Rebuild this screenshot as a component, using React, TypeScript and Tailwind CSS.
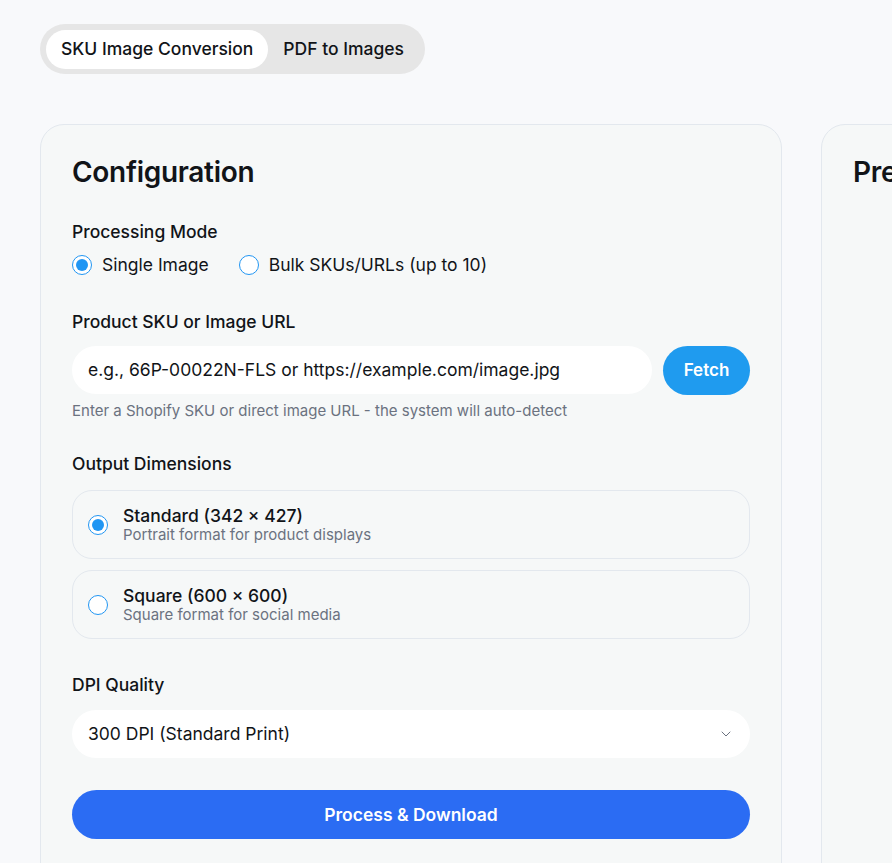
import { ChevronDown } from 'lucide-react';

const Radio = ({ checked }: { checked: boolean }) => (
    <span className="flex h-[20px] w-[20px] shrink-0 items-center justify-center rounded-full border border-[#2196f3] bg-white">
        {checked && <span className="h-[12px] w-[12px] rounded-full bg-[#2196f3]" />}
    </span>
);

const DimensionOption = ({ title, desc, checked }: { title: string; desc: string; checked: boolean }) => (
    <div className="flex h-[69px] items-center gap-[15px] rounded-[20px] border border-[#e3e8ee] px-[15px]">
        <Radio checked={checked} />
        <div className="flex flex-col">
            <span className="text-[17.5px] font-medium leading-[21px] text-[#111418]">{title}</span>
            <span className="text-[15px] leading-[18px] text-[#6b7280]">{desc}</span>
        </div>
    </div>
);

const App = () => {
    return (
        <div className="min-h-[863px] overflow-hidden bg-[#f8f9fb] font-['Inter',sans-serif] text-[#111418]">
            <div className="px-[40px] pt-[24px]">
                <div className="inline-flex h-[50px] items-center rounded-full bg-[#e6e6e6] p-[6px]">
                    <button className="h-[39px] rounded-full bg-white px-[15px] text-[17.5px] font-medium text-[#111418]">SKU Image Conversion</button>
                    <button className="h-[39px] rounded-full px-[15px] text-[17.5px] font-medium text-[#111418]">PDF to Images</button>
                </div>

                <div className="mt-[50px] flex gap-[39px]">
                    <div className="w-[742px] shrink-0 rounded-t-[24px] border border-[#e3e8ee] bg-[#f6f8f8] px-[31px] pt-[28px] pb-[30px]">
                        <h2 className="text-[28px] font-semibold leading-[38px] tracking-[-0.3px]">Configuration</h2>

                        <div className="mt-[29px] text-[17.5px] font-medium leading-[24px]">Processing Mode</div>
                        <div className="mt-[8px] flex items-center gap-[30px]">
                            <label className="flex items-center gap-[10px] text-[17.5px]">
                                <Radio checked />
                                Single Image
                            </label>
                            <label className="flex items-center gap-[10px] text-[17.5px]">
                                <Radio checked={false} />
                                Bulk SKUs/URLs (up to 10)
                            </label>
                        </div>

                        <div className="mt-[32px] text-[17.5px] font-medium leading-[24px]">Product SKU or Image URL</div>
                        <div className="mt-[12px] flex gap-[11px]">
                            <div className="flex h-[48px] flex-1 items-center rounded-full bg-white px-[16px] text-[17.5px] text-[#111418]">
                                e.g., 66P-00022N-FLS or https://example.com/image.jpg
                            </div>
                            <button className="h-[49px] w-[87px] rounded-full bg-[#1f9bef] text-[17px] font-semibold text-white">Fetch</button>
                        </div>
                        <div className="mt-[7px] text-[15px] leading-[18px] text-[#6b7280]">Enter a Shopify SKU or direct image URL - the system will auto-detect</div>

                        <div className="mt-[32px] text-[17.5px] font-medium leading-[24px]">Output Dimensions</div>
                        <div className="mt-[14px] flex flex-col gap-[11px]">
                            <DimensionOption title="Standard (342 × 427)" desc="Portrait format for product displays" checked />
                            <DimensionOption title="Square (600 × 600)" desc="Square format for social media" checked={false} />
                        </div>

                        <div className="mt-[34px] text-[17.5px] font-medium leading-[24px]">DPI Quality</div>
                        <div className="mt-[13px] flex h-[48px] items-center justify-between rounded-full bg-white px-[16px] text-[17.5px]">
                            <span>300 DPI (Standard Print)</span>
                            <ChevronDown className="h-[16px] w-[16px] text-[#6b7280]" strokeWidth={1.5} />
                        </div>

                        <button className="mt-[32px] h-[49px] w-full rounded-full bg-[#2b6cf3] text-[17.5px] font-semibold text-white">Process & Download</button>
                    </div>

                    <div className="w-[742px] shrink-0 rounded-t-[24px] border border-[#e3e8ee] bg-[#f6f8f8] px-[31px] pt-[28px]">
                        <h2 className="text-[28px] font-semibold leading-[38px] tracking-[-0.3px]">Preview</h2>
                    </div>
                </div>
            </div>
        </div>
    );
};

export default App;
